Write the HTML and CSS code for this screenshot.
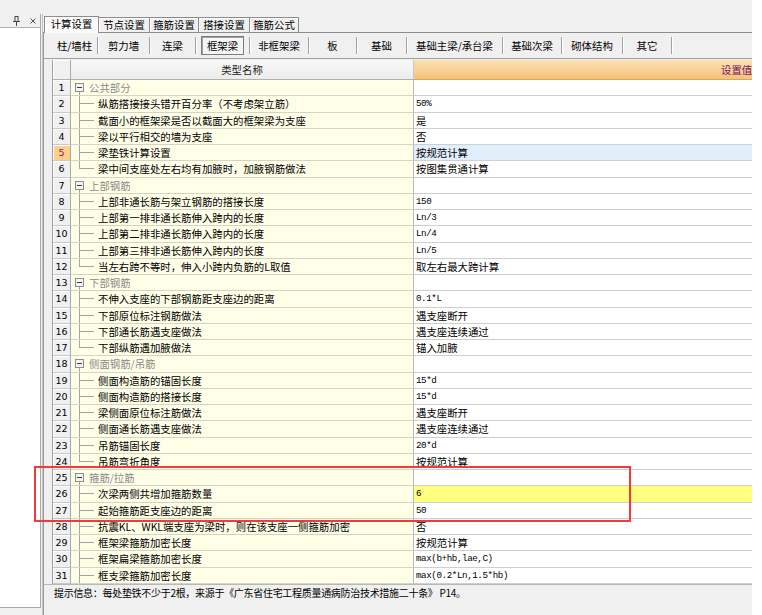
FILE: index.html
```html
<!DOCTYPE html>
<html lang="zh">
<head>
<meta charset="utf-8">
<link rel="stylesheet" href="styles.css">
</head>
<body>
<div class="app">
  <aside class="side">
    <div class="side-head">
      <svg class="pin" width="7" height="10" viewBox="0 0 7 10"><rect x="2" y="0.5" width="3" height="5" fill="none" stroke="#444"/><path d="M0 5.5H7M3.5 5.5V10" stroke="#444" fill="none"/></svg>
      <svg class="close" width="6" height="6" viewBox="0 0 6 6"><path d="M0.5 0.5L5.5 5.5M5.5 0.5L0.5 5.5" stroke="#555" fill="none"/></svg>
    </div>
    <div class="side-body"></div>
  </aside>
  <div class="split"></div>
  <main class="main">
    <div class="tabs">
      <div class="tab on t1">计算设置</div>
      <div class="tab t2">节点设置</div>
      <div class="tab t3">箍筋设置</div>
      <div class="tab t4">搭接设置</div>
      <div class="tab t5">箍筋公式</div>
    </div>
    <div class="panel">
      <div class="subtabs">
        <div class="st">柱/墙柱</div>
        <div class="st">剪力墙</div>
        <div class="st">连梁</div>
        <div class="st on"><span>框架梁</span></div>
        <div class="st">非框架梁</div>
        <div class="st">板</div>
        <div class="st">基础</div>
        <div class="st">基础主梁/承台梁</div>
        <div class="st">基础次梁</div>
        <div class="st">砌体结构</div>
        <div class="st">其它</div>
      </div>
      <div class="grid">
        <div class="row head"><div class="num"></div><div class="name">类型名称</div><div class="val">设置值</div></div>
        <div class="row"><div class="num">1</div><div class="name g"><span class="box"></span>公共部分</div><div class="val"></div></div>
        <div class="row"><div class="num">2</div><div class="name c">纵筋搭接接头错开百分率（不考虑架立筋）</div><div class="val m">50%</div></div>
        <div class="row"><div class="num">3</div><div class="name c">截面小的框架梁是否以截面大的框架梁为支座</div><div class="val">是</div></div>
        <div class="row"><div class="num">4</div><div class="name c">梁以平行相交的墙为支座</div><div class="val">否</div></div>
        <div class="row sel"><div class="num">5</div><div class="name c">梁垫铁计算设置</div><div class="val">按规范计算</div></div>
        <div class="row"><div class="num">6</div><div class="name l">梁中间支座处左右均有加腋时，加腋钢筋做法</div><div class="val">按图集贯通计算</div></div>
        <div class="row"><div class="num">7</div><div class="name g"><span class="box"></span>上部钢筋</div><div class="val"></div></div>
        <div class="row"><div class="num">8</div><div class="name c">上部非通长筋与架立钢筋的搭接长度</div><div class="val m">150</div></div>
        <div class="row"><div class="num">9</div><div class="name c">上部第一排非通长筋伸入跨内的长度</div><div class="val m">Ln/3</div></div>
        <div class="row"><div class="num">10</div><div class="name c">上部第二排非通长筋伸入跨内的长度</div><div class="val m">Ln/4</div></div>
        <div class="row"><div class="num">11</div><div class="name c">上部第三排非通长筋伸入跨内的长度</div><div class="val m">Ln/5</div></div>
        <div class="row"><div class="num">12</div><div class="name l">当左右跨不等时，伸入小跨内负筋的L取值</div><div class="val">取左右最大跨计算</div></div>
        <div class="row"><div class="num">13</div><div class="name g"><span class="box"></span>下部钢筋</div><div class="val"></div></div>
        <div class="row"><div class="num">14</div><div class="name c">不伸入支座的下部钢筋距支座边的距离</div><div class="val m">0.1*L</div></div>
        <div class="row"><div class="num">15</div><div class="name c">下部原位标注钢筋做法</div><div class="val">遇支座断开</div></div>
        <div class="row"><div class="num">16</div><div class="name c">下部通长筋遇支座做法</div><div class="val">遇支座连续通过</div></div>
        <div class="row"><div class="num">17</div><div class="name l">下部纵筋遇加腋做法</div><div class="val">锚入加腋</div></div>
        <div class="row"><div class="num">18</div><div class="name g"><span class="box"></span>侧面钢筋/吊筋</div><div class="val"></div></div>
        <div class="row"><div class="num">19</div><div class="name c">侧面构造筋的锚固长度</div><div class="val m">15*d</div></div>
        <div class="row"><div class="num">20</div><div class="name c">侧面构造筋的搭接长度</div><div class="val m">15*d</div></div>
        <div class="row"><div class="num">21</div><div class="name c">梁侧面原位标注筋做法</div><div class="val">遇支座断开</div></div>
        <div class="row"><div class="num">22</div><div class="name c">侧面通长筋遇支座做法</div><div class="val">遇支座连续通过</div></div>
        <div class="row"><div class="num">23</div><div class="name c">吊筋锚固长度</div><div class="val m">20*d</div></div>
        <div class="row"><div class="num">24</div><div class="name l">吊筋弯折角度</div><div class="val">按规范计算</div></div>
        <div class="row"><div class="num">25</div><div class="name g"><span class="box"></span>箍筋/拉筋</div><div class="val"></div></div>
        <div class="row hl"><div class="num">26</div><div class="name c">次梁两侧共增加箍筋数量</div><div class="val m">6</div></div>
        <div class="row"><div class="num">27</div><div class="name c">起始箍筋距支座边的距离</div><div class="val m">50</div></div>
        <div class="row"><div class="num">28</div><div class="name c">抗震KL、WKL端支座为梁时，则在该支座一侧箍筋加密</div><div class="val">否</div></div>
        <div class="row"><div class="num">29</div><div class="name c">框架梁箍筋加密长度</div><div class="val">按规范计算</div></div>
        <div class="row"><div class="num">30</div><div class="name c">框架扁梁箍筋加密长度</div><div class="val m">max(b+hb,lae,C)</div></div>
        <div class="row"><div class="num">31</div><div class="name c">框支梁箍筋加密长度</div><div class="val m">max(0.2*Ln,1.5*hb)</div></div>
      </div>
      <div class="status">提示信息：每处垫铁不少于2根，来源于《广东省住宅工程质量通病防治技术措施二十条》 P14。</div>
    </div>
  </main>
  <div class="mark"></div>
</div>
</body>
</html>
```
FILE: styles.css
```css
* { box-sizing: border-box; }
html, body { margin: 0; padding: 0; background: #fff; }
body {
  font-family: "Noto Sans CJK SC", "Noto Sans", sans-serif;
  font-size: 10.4px;
  color: #000;
}
.app {
  display: flex;
  width: 752px;
  height: 615px;
  background: #f0f0f0;
  position: relative;
  overflow: hidden;
}
/* left dock panel */
.side {
  width: 41px;
  margin-top: 14px;
  margin-bottom: 7px;
  display: flex;
  flex-direction: column;
  border-right: 1px solid #a9a9a9;
}
.side-head {
  height: 14px;
  display: flex;
  align-items: center;
  justify-content: flex-end;
  gap: 10px;
  padding-right: 4px;
  border-bottom: 1px solid #b4b4b4;
}
.side-body {
  flex: 1;
  background: #fff;
  border-bottom: 1px solid #a9a9a9;
}
.split {
  width: 2px;
  margin-top: 14px;
  border-right: 1px solid #c4c4c4;
}
/* main */
.main {
  flex: 1;
  display: flex;
  flex-direction: column;
  padding-top: 17px;
  min-width: 0;
}
.tabs {
  display: flex;
  height: 15px;
  padding-left: 1px;
}
.tab {
  height: 15px;
  border: 1px solid #8c8c8c;
  border-bottom: none;
  margin-right: -1px;
  background: #f0f0f0;
  text-align: center;
  line-height: 13px;
  box-shadow: inset 1px 1px 0 #fff;
}
.tab.on {
  height: 17px;
  margin-top: -1px;
  margin-bottom: -1px;
  background: #fbfbfb;
  position: relative;
  z-index: 1;
}
.t1 { width: 55px; }
.t2 { width: 52px; }
.t3 { width: 50px; }
.t4 { width: 52px; }
.t5 { width: 50px; }
.panel {
  flex: 1;
  border-top: 1px solid #8c8c8c;
  border-left: 1px solid #9a9a9a;
  display: flex;
  flex-direction: column;
  min-width: 0;
}
.subtabs {
  height: 26px;
  padding-left: 8px;
  border-bottom: 1px solid #a0a0a0;
  display: grid;
  grid-template-columns: 46px 52px 46px 54px 59px 48px 50px 96px 59px 61px 49px;
  align-items: center;
}
.st {
  height: 17px;
  display: flex;
  align-items: center;
  justify-content: center;
  border-right: 1px solid #a0a0a0;
  box-shadow: 1px 0 0 #fff;
  white-space: nowrap;
}
.st.on span {
  display: block;
  padding: 2px 5px 1px;
  border: 1px solid #7c7c7c;
  background: #f6f6f6;
  box-shadow: inset 1px 1px 0 #a0a0a0;
  line-height: 14px;
}
/* grid table */
.grid {
  margin: 1px 0 0 8px;
  width: 700px;
  border-left: 1px solid #a0a0a0;
}
.row {
  display: flex;
  height: 16.25px;
}
.num {
  width: 18px;
  flex: none;
  background: #f0f0f0;
  border-right: 1px solid #a8a8a8;
  border-bottom: 1px solid #c8c8c8;
  box-shadow: inset 1px 1px 0 #fff;
  font-family: "DejaVu Sans", sans-serif;
  font-size: 9.5px;
  text-align: center;
  line-height: 15px;
}
.name {
  width: 343px;
  flex: none;
  background: #ffffe8;
  border-right: 1px solid #b8b8b8;
  border-bottom: 1px solid #d4d4c4;
  display: flex;
  align-items: center;
  white-space: nowrap;
  overflow: hidden;
  line-height: 15px;
}
.val {
  flex: 1;
  min-width: 0;
  background: #fff;
  border-bottom: 1px solid #cfcfcf;
  padding-left: 2px;
  white-space: nowrap;
  overflow: hidden;
  line-height: 15px;
}
.val.m {
  font-family: "Liberation Mono", monospace;
  font-size: 9.2px;
  letter-spacing: -0.4px;
}
.name.c {
  padding-left: 27px;
  background:
    linear-gradient(#a4a4a4, #a4a4a4) 8px 0 / 1px 100% no-repeat,
    linear-gradient(#a4a4a4, #a4a4a4) 8px 50% / 15px 1px no-repeat,
    #ffffe8;
}
.name.l {
  padding-left: 27px;
  background:
    linear-gradient(#a4a4a4, #a4a4a4) 8px 0 / 1px 50% no-repeat,
    linear-gradient(#a4a4a4, #a4a4a4) 8px 50% / 15px 1px no-repeat,
    #ffffe8;
}
.name.g {
  color: #8a8a8a;
  background:
    linear-gradient(#a4a4a4, #a4a4a4) 8px 100% / 1px 4px no-repeat,
    #ffffe8;
}
.box {
  width: 9px;
  height: 9px;
  margin: 0 5px 0 4px;
  flex: none;
  border: 1px solid #8e8e8e;
  background: linear-gradient(#3c3c3c, #3c3c3c) center / 5px 1px no-repeat, #f4f4f4;
}
.row.head { height: 20px; }
.head .num {
  border-bottom: 1px solid #b0b0b0;
}
.head .name {
  justify-content: center;
  background: linear-gradient(#f8f8f8, #ececec);
  border-bottom: 1px solid #b0b0b0;
  border-right: 1px solid #c8c8c8;
  color: #222;
  line-height: 19px;
}
.head .val {
  background: linear-gradient(#fbe2b4, #f4c377);
  border-bottom: 1px solid #d8a860;
  color: #7a0f6a;
  padding-left: 307px;
  line-height: 19px;
}
.row.sel .num {
  background: #fbd08a;
  color: #8a1a5a;
}
.row.sel .val { background: #e1eefc; }
.row.hl .val { background: #ffff80; }
.status {
  height: 17px;
  padding: 0 0 0 10px;
  line-height: 15px;
  font-size: 10px;
  letter-spacing: -0.3px;
  border-top: 1px solid #b8b8b8;
  white-space: nowrap;
}
/* annotation */
.mark {
  position: absolute;
  left: 34px;
  top: 466px;
  width: 597px;
  height: 56px;
  border: 2px solid #f23a3a;
}
```
